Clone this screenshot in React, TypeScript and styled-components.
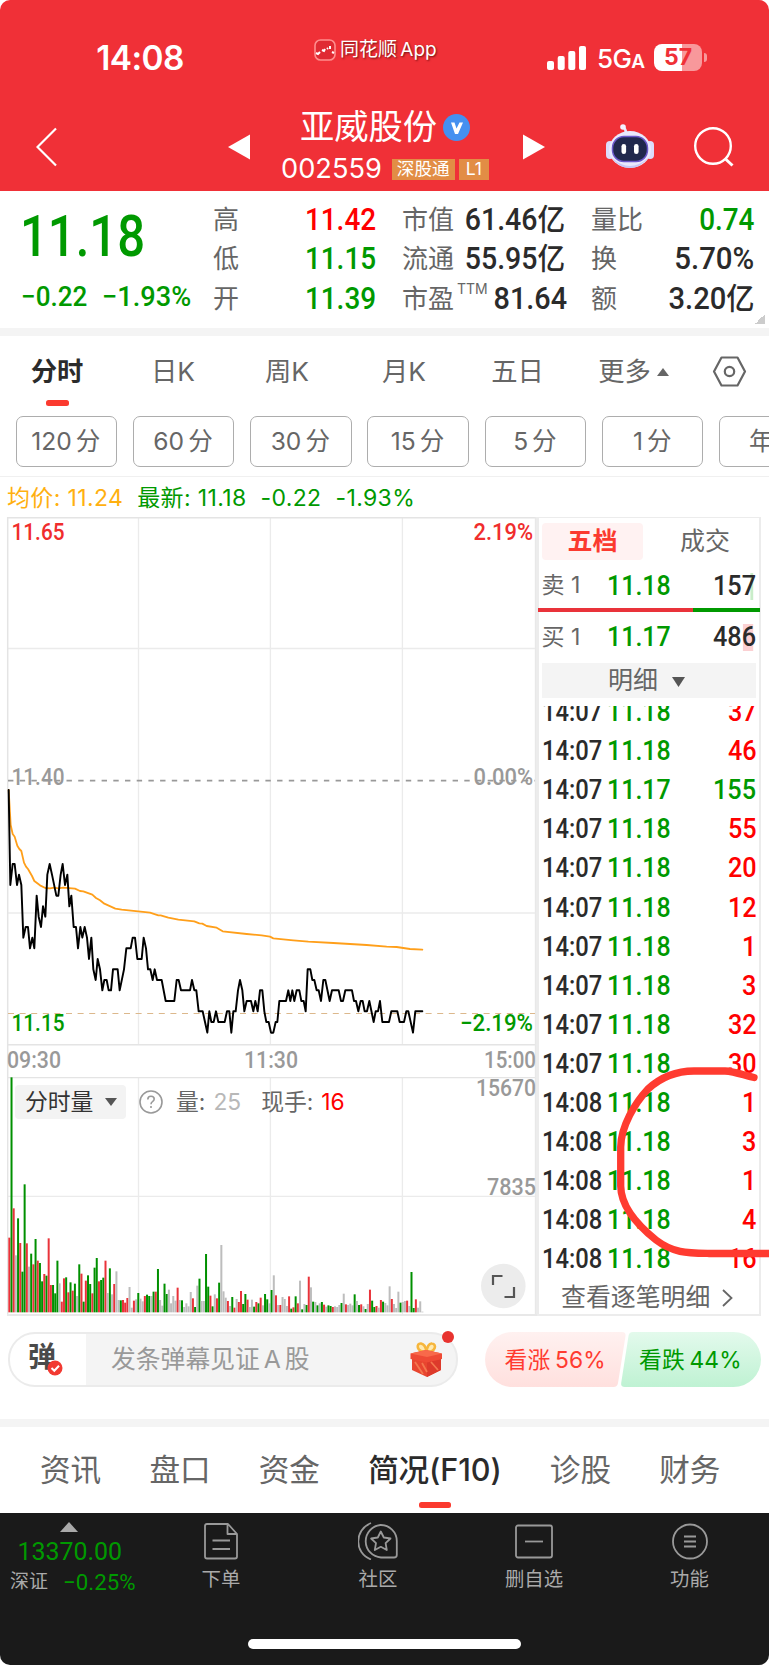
import React from "react";
import styled, { createGlobalStyle } from "styled-components";

const RED = "#ff0000";
const GREEN = "#009900";
const INK = "#2b2b2b";
const GREY = "#666";

const Global = createGlobalStyle`
  html, body { margin: 0; background: #fff; }
  * { box-sizing: border-box; }
`;

const Page = styled.main`
  position: relative;
  width: 769px;
  height: 1665px;
  overflow: hidden;
  border-radius: 10px;
  background: #fff;
  font-family: Inter, "Noto Sans CJK SC", sans-serif;
  line-height: 1.2;
  color: ${GREY};
  white-space: nowrap;
`;

const Num = styled.span<{ $size: number; $squeeze?: number; $end?: boolean; $color?: string; $weight?: number }>`
  display: inline-block;
  font-family: Roboto, "Noto Sans CJK SC", sans-serif;
  font-size: ${(p) => p.$size}px;
  font-weight: ${(p) => p.$weight ?? 500};
  color: ${(p) => p.$color ?? INK};
  line-height: 1;
  transform: scaleX(${(p) => p.$squeeze ?? 1});
  transform-origin: ${(p) => (p.$end ? "right" : "left")} center;
`;

/* ---------- header ---------- */
const Header = styled.header`
  height: 191px;
  background: #f03037;
  color: #fff;
`;
const StatusBar = styled.div`
  height: 107px;
  padding-top: 8px;
  display: grid;
  grid-template-columns: 280px 267px 1fr;
  align-items: center;
`;
const Clock = styled.div`
  margin-top: 2px;
  text-align: center;
  font-size: 33.4px;
  font-weight: 600;
  letter-spacing: -0.6px;
`;
const AppLabel = styled.div`
  display: flex;
  align-items: center;
  gap: 4px;
  margin: -14px 0 0 34px;
  font-size: 19px;
  word-spacing: -2px;
  text-shadow: 1px 1px 2px rgba(60, 0, 0, 0.7);
`;
const Signals = styled.div`
  display: flex;
  align-items: center;
`;
const Network = styled.div`
  width: 57px;
  padding: 2px 0 0 11px;
  font-size: 26px;
  font-weight: 500;
  letter-spacing: -0.6px;
  small { font-size: 19px; font-weight: 600; }
`;
const Battery = styled.div`
  width: 48px;
  height: 27px;
  margin-left: 11px;
  border-radius: 8px;
  background: linear-gradient(90deg, #fff 58%, #f8989b 58%);
  color: #f03037;
  font-size: 23px;
  line-height: 27px;
  font-weight: 700;
  text-align: center;
`;
const BatteryNub = styled.div`
  width: 3px;
  height: 9px;
  margin-left: 2px;
  border-radius: 0 4px 4px 0;
  background: #f8989b;
`;
const TitleBar = styled.div`
  height: 84px;
  display: grid;
  grid-template-columns: 36px 192px 22px 273px 60px 88px 1fr;
  align-items: center;
  > svg { display: block; margin-top: -4px; }
`;
const TitleBlock = styled.div`
  height: 84px;
  display: flex;
  flex-direction: column;
  align-items: center;
  padding-right: 3px;
`;
const StockName = styled.div`
  height: 40px;
  display: flex;
  align-items: center;
  gap: 6px;
  font-size: 34.3px;
  line-height: 40px;
`;
const CodeRow = styled.div`
  height: 48px;
  display: flex;
  align-items: center;
  font-size: 27.2px;
`;
const Tag = styled.span<{ $pad: number }>`
  height: 21px;
  line-height: 20px;
  padding: 0 ${(p) => p.$pad}px;
  margin-left: 4px;
  background: #e28d45;
  font-size: 17.6px;
  &:first-of-type { margin-left: 10px; }
`;

/* ---------- quote ---------- */
const Quote = styled.section`
  position: relative;
  height: 137px;
  display: grid;
  grid-template-columns: 213px 163.5px 163.5px 163.5px;
  column-gap: 25.5px;
`;
const LastPrice = styled.div`
  padding: 17px 0 0 20px;
  display: flex;
  flex-direction: column;
`;
const Deltas = styled.div`
  display: flex;
  gap: 9.5px;
  margin: 18px 0 0 1px;
`;
const StatColumn = styled.div`
  position: relative;
  padding-top: 9px;
  margin-left: -25.5px;
  margin-right: 25.5px;
`;
const StatRow = styled.div`
  height: 39.3px;
  display: flex;
  justify-content: space-between;
  align-items: center;
  font-size: 26px;
  line-height: 39px;
  sup { font-size: 14px; line-height: 14px; vertical-align: 14px; margin-left: 3px; }
  b { font-weight: 500; font-size: 30px; line-height: 1; }
`;
const Corner = styled.i`
  position: absolute;
  right: 4px;
  bottom: 4px;
  width: 10px;
  height: 10px;
  background: linear-gradient(135deg, transparent 50%, #ccc 50%);
`;
const Band = styled.div`
  height: 7.5px;
  background: #f4f4f4;
`;

/* ---------- period tabs ---------- */
const PeriodTabs = styled.nav`
  position: relative;
  height: 80.5px;
  display: grid;
  grid-template-columns: 114px 118px 110px 124px 103px 129px 1fr;
  > svg { margin: 20px 0 0 14px; }
`;
const PeriodTab = styled.div<{ $on?: boolean }>`
  display: flex;
  justify-content: center;
  align-items: center;
  height: 74px;
  padding-bottom: 2px;
  font-size: 26.3px;
  line-height: 34px;
  font-weight: ${(p) => (p.$on ? 700 : 400)};
  color: ${(p) => (p.$on ? INK : GREY)};
  position: relative;
  svg { margin-left: 6px; }
`;
const Marker = styled.i<{ $w: number; $bottom: number }>`
  position: absolute;
  bottom: ${(p) => p.$bottom}px;
  left: calc(50% - ${(p) => p.$w / 2}px);
  width: ${(p) => p.$w}px;
  height: 6px;
  border-radius: 2.5px;
  background: #fb3a2f;
`;
const MinuteRow = styled.div`
  height: 61px;
  padding-left: 15.5px;
  display: flex;
  gap: 15.8px;
  overflow: hidden;
  border-bottom: 1.5px solid #f0f0f0;
`;
const MinuteButton = styled.div`
  flex: 0 0 101.5px;
  height: 51px;
  border: 1.5px solid #adadad;
  border-radius: 7px;
  display: flex;
  justify-content: center;
  align-items: center;
  gap: 4px;
  padding: 1px 1px 0 0;
  font-size: 24.6px;
`;

/* ---------- chart ---------- */
const Summary = styled.div`
  height: 40px;
  padding: 3px 0 0 7px;
  display: flex;
  align-items: center;
  font-size: 23px;
  letter-spacing: 0.36px;
  color: ${GREEN};
  span { margin-right: 14px; }
  span:first-child { color: #ffb010; }
`;
const Market = styled.section`
  height: 799px;
  display: flex;
`;
const Charts = styled.div`
  position: relative;
  width: 537px;
  svg { display: block; }
`;
const VolumeLegend = styled.div`
  position: absolute;
  left: 15px;
  top: 567.5px;
  height: 34px;
  display: flex;
  align-items: center;
  font-size: 22.8px;
`;
const Selector = styled.div`
  width: 111px;
  height: 34px;
  padding-left: 10px;
  margin-right: 13px;
  border-radius: 4px;
  background: #f3f3f3;
  color: #333;
  display: flex;
  align-items: center;
  gap: 12px;
`;
const Legend = styled.span<{ $left: number; $color?: string }>`
  margin-left: ${(p) => p.$left}px;
  color: ${(p) => p.$color ?? GREY};
`;

/* ---------- order book ---------- */
const Book = styled.aside`
  position: relative;
  width: 224px;
  border: 2px solid #ececec;
  border-top-width: 1.5px;
`;
const BookTabs = styled.div`
  display: grid;
  grid-template-columns: 101px 1fr;
  padding: 5px 3px 0;
  height: 42px;
`;
const BookTab = styled.div<{ $on?: boolean }>`
  height: 37px;
  line-height: 36px;
  border-radius: 4px;
  text-align: center;
  font-size: 25px;
  font-weight: ${(p) => (p.$on ? 700 : 400)};
  color: ${(p) => (p.$on ? "#fb3a2f" : GREY)};
  background: ${(p) => (p.$on ? "#fff2f2" : "none")};
  padding-left: ${(p) => (p.$on ? 0 : 11)}px;
`;
const Level = styled.div<{ $h: number; $top: number; $depth: number; $tint: string }>`
  height: ${(p) => p.$h}px;
  padding: ${(p) => p.$top}px 2.5px 0 2.5px;
  display: grid;
  grid-template-columns: 65.5px 1fr auto;
  align-items: center;
  font-size: 23px;
  > :last-child {
    height: 27px;
    line-height: 27px;
    background: linear-gradient(${(p) => p.$tint}, ${(p) => p.$tint}) no-repeat;
    background-size: ${(p) => p.$depth}px 27px;
    background-position: right 3px top;
  }
`;
const Ratio = styled.div`
  height: 4px;
  margin: 0 -1px;
  background: linear-gradient(90deg, #e9333a 69.6%, ${GREEN} 69.6%);
`;
const DetailHead = styled.div`
  height: 35px;
  margin: 0 3px;
  padding: 0 5px 1px 0;
  background: #f4f4f4;
  display: flex;
  justify-content: center;
  align-items: center;
  gap: 14px;
  font-size: 25px;
  svg { margin-top: 3px; }
`;
const Tape = styled.div`
  height: 571px;
  margin-top: 8px;
  overflow: hidden;
`;
const TapeInner = styled.div`
  margin-top: -13px;
`;
const TapeRow = styled.div`
  height: 39.1px;
  padding: 0 2.5px 0 2.5px;
  display: grid;
  grid-template-columns: 65.5px 1fr auto;
  align-items: center;
`;
const BookFooter = styled.div`
  height: 38px;
  padding-left: 22px;
  padding-top: 3px;
  display: flex;
  align-items: center;
  gap: 12px;
  font-size: 24.9px;
`;
const Stroke = styled.svg`
  position: absolute;
  left: -2px;
  top: -1.5px;
  overflow: visible;
`;

/* ---------- comment bar ---------- */
const CommentBar = styled.section`
  height: 103px;
  padding: 15.5px 8px 0;
  display: flex;
`;
const CommentBox = styled.div`
  position: relative;
  width: 450px;
  height: 55px;
  border: 2px solid #ebebeb;
  border-radius: 27px;
  background: linear-gradient(90deg, #fff 76px, #f4f4f4 76px);
  display: flex;
  align-items: center;
  color: #999;
  font-size: 24.8px;
`;
const Danmu = styled.b`
  width: 76px;
  padding-left: 18px;
  font-size: 28px;
  font-weight: 700;
  line-height: 38px;
  margin-top: -4px;
  color: #4a4a4a;
`;
const Placeholder = styled.span`
  margin: 1px 0 0 25px;
  word-spacing: -3px;
`;
const Over = styled.svg<{ $x: number; $y: number }>`
  position: absolute;
  left: ${(p) => p.$x}px;
  top: ${(p) => p.$y}px;
  overflow: visible;
`;
const Votes = styled.div`
  position: relative;
  width: 276px;
  height: 55px;
  margin-left: 27px;
  display: flex;
  > svg { position: absolute; left: 0; top: 0; }
`;
const Vote = styled.div<{ $color: string; $left: number; $w: number }>`
  position: relative;
  width: ${(p) => p.$w}px;
  padding-left: ${(p) => p.$left}px;
  line-height: 56px;
  font-size: 22.8px;
  font-weight: 400;
  word-spacing: -2px;
  letter-spacing: 0.15px;
  color: ${(p) => p.$color};
`;

/* ---------- info tabs ---------- */
const InfoTabs = styled.nav`
  height: 86px;
  display: flex;
  gap: 48.2px;
  padding-left: 40px;
`;
const InfoTab = styled.div<{ $on?: boolean }>`
  position: relative;
  flex: 0 0 ${(p) => (p.$on ? 131 : 61)}px;
  display: flex;
  justify-content: center;
  font-size: 30.6px;
  line-height: 86px;
  font-weight: ${(p) => (p.$on ? 500 : 400)};
  letter-spacing: ${(p) => (p.$on ? -0.1 : 0)}px;
  color: ${(p) => (p.$on ? INK : GREY)};
`;

/* ---------- toolbar ---------- */
const Toolbar = styled.footer`
  height: 153px;
  background: #1a1a1a;
  color: #aaa;
`;
const Tools = styled.div`
  height: 126px;
  display: grid;
  grid-template-columns: 143px 156px 158px 154px 157px;
`;
const IndexCell = styled.div`
  padding-left: 10px;
  svg { display: block; margin: 9px 0 9px 50px; }
  > span { display: block; padding-left: 8px; height: 20px; line-height: 20px; }
`;
const IndexRow = styled.div`
  display: flex;
  align-items: center;
  gap: 14.5px;
  margin-top: 10px;
  font-size: 19px;
`;
const Tool = styled.div`
  display: flex;
  flex-direction: column;
  align-items: center;
  padding-top: 9px;
  font-size: 19.4px;
  line-height: 26px;
  svg { display: block; margin-bottom: 6px; }
`;
const HomeIndicator = styled.div`
  width: 273px;
  height: 10px;
  margin-left: 248px;
  border-radius: 5px;
  background: #fff;
`;

/* ---------- data ---------- */
const PRICE =
  "26,30 31,315 38,252 44,252 51,315 57,284 64,315 70,473 77,441 84,441 90,505 97,473 103,505 110,347 116,410 123,441 129,379 136,410 142,284 149,252 156,284 169,347 175,347 182,284 188,252 195,315 202,284 208,379 214,347 221,441 228,441 234,505 241,441 247,473 254,441 261,473 267,537 274,473 280,568 287,600 293,537 300,568 307,631 313,600 320,600 326,631 333,631 339,568 353,568 359,631 372,568 379,505 392,505 398,473 405,473 412,537 425,537 431,473 438,505 444,568 451,568 458,600 464,568 471,600 485,600 497,663 523,663 530,600 536,600 543,631 570,631 576,600 583,631 589,631 596,694 608,694 615,726 622,758 628,694 634,726 641,726 648,694 655,726 674,726 681,694 688,694 694,758 700,694 707,694 714,631 720,600 727,631 733,694 740,663 753,663 760,694 766,663 773,694 780,631 787,631 793,694 799,726 806,726 813,758 820,758 827,726 832,726 838,663 858,663 865,631 871,663 877,631 883,663 890,631 898,631 904,663 911,663 917,694 923,568 931,568 937,600 943,600 950,631 956,631 963,663 970,600 976,600 989,663 996,631 1016,631 1023,663 1029,663 1036,631 1056,631 1062,663 1068,663 1075,694 1082,663 1088,663 1094,694 1101,694 1108,663 1121,726 1127,694 1134,694 1140,663 1147,726 1167,726 1174,694 1192,694 1199,726 1212,726 1219,694 1225,694 1239,758 1246,694 1267,694";
const AVERAGE =
  "26,30 32,135 38,162 44,170 52,197 58,207 64,213 72,248 78,260 84,267 96,288 103,303 120,316 136,324 150,325 162,323 175,325 190,323 225,326 240,333 250,334 277,344 288,354 300,361 313,371 346,386 365,389 450,398 475,406 482,406 505,413 535,419 583,424 598,430 607,431 620,438 650,443 668,454 740,462 785,466 810,470 820,475 880,481 925,485 1000,489 1100,495 1160,500 1190,501 1230,507 1267,509";
const VOLUME =
  "r503 g22 r415 x556 g445 r519 g605 g343 r520 x590 g551 r583 g507 r572 g579 g634 r612 g617 r505 r645 g645 g670 g572 x640 r695 r625 g622 r667 g637 r662 g641 x678 g583 r611 g695 r632 g616 g642 r670 g593 g564 r634 g630 g623 r572 x669 g595 x673 r642 x604 x690 g691 r690 r698 r684 x651 x713 r692 x688 g669 x686 x694 r678 g674 g678 x678 g665 r665 g597 x690 x707 g641 g672 x659 x700 x678 x692 r653 x690 g691 x711 x700 x709 x666 r685 g711 x647 g626 x693 x693 g552 g650 r677 g709 x673 r685 g638 x525 x664 x683 r693 x708 g681 r713 x687 r696 r663 g702 g672 r689 x711 x689 g710 r696 g700 r683 x706 g672 g688 x700 g660 x616 r676 x705 r705 x681 x687 x708 r679 g716 r712 g679 r700 x632 g718 x702 g705 r620 x652 g695 x696 g706 x700 g696 r704 x710 g706 g708 r711 x709 x711 x705 g699 x671 r703 x705 x701 x706 g673 x693 g705 r703 x709 g717 x702 r659 g692 g711 r708 x713 r690 g695 x699 x706 x649 r687 x702 x714 x665 g698 x696 x693 r692 x708 g606 g714 r688 x713 x694 x725"
    .split(" ")
    .map((s) => ({ kind: s[0], top: Number(s.slice(1)) }));
const BAR: Record<string, string> = { r: "#e9333a", g: "#009000", x: "#bdbdbd" };

const TAPE: [string, string, string, boolean][] = [
  ["14:07", "11.18", "37", true],
  ["14:07", "11.18", "46", true],
  ["14:07", "11.17", "155", false],
  ["14:07", "11.18", "55", true],
  ["14:07", "11.18", "20", true],
  ["14:07", "11.18", "12", true],
  ["14:07", "11.18", "1", true],
  ["14:07", "11.18", "3", true],
  ["14:07", "11.18", "32", true],
  ["14:07", "11.18", "30", true],
  ["14:08", "11.18", "1", true],
  ["14:08", "11.18", "3", true],
  ["14:08", "11.18", "1", true],
  ["14:08", "11.18", "4", true],
  ["14:08", "11.18", "16", true],
];

/* ---------- pieces ---------- */
function AxisText({ x, y, w, fill, end, children }: { x: number; y: number; w: number; fill: string; end?: boolean; children: string }) {
  return (
    <text x={end ? x - w : x} y={y} textLength={w} lengthAdjust="spacingAndGlyphs" fill={fill} fontFamily="Roboto, sans-serif" fontWeight={500} fontSize={23.5}>
      {children}
    </text>
  );
}

function PriceChart() {
  return (
    <svg width="537" height="560" fill="none">
      <path d="M138.5 0V528M270.4 0V528M402.4 0V528M8 131.5H535M8 396H535" stroke="#ebebeb" strokeWidth="1.3" />
      <path d="M7.7 560V.7H536M7.7 527.7H536" stroke="#e4e4e4" strokeWidth="1.5" />
      <path d="M535.8 0V560" stroke="#e8e8e8" strokeWidth="2" />
      <path d="M8 263.7H535" stroke="#999" strokeWidth="1.8" strokeDasharray="5.4 6.3" />
      <path d="M8 496.5H535" stroke="#dcb88c" strokeWidth="1.1" strokeDasharray="6 5.6" />
      <AxisText x={11.5} y={22.5} w={53} fill="#f02d2d">11.65</AxisText>
      <AxisText x={533} y={22.5} w={59.5} fill="#f02d2d" end>2.19%</AxisText>
      <AxisText x={11.5} y={268} w={53} fill="#999">11.40</AxisText>
      <AxisText x={533} y={268} w={59.5} fill="#999" end>0.00%</AxisText>
      <AxisText x={11.5} y={514} w={53} fill={GREEN}>11.15</AxisText>
      <AxisText x={533} y={514} w={73} fill={GREEN} end>−2.19%</AxisText>
      <AxisText x={7} y={551} w={54} fill="#999">09:30</AxisText>
      <AxisText x={298} y={551} w={54} fill="#999" end>11:30</AxisText>
      <AxisText x={536} y={551} w={52} fill="#999" end>15:00</AxisText>
      <g transform="translate(0 263) scale(.33333)" strokeLinejoin="round" strokeLinecap="round">
        <polyline points={AVERAGE} stroke="#ff9f1a" strokeWidth="5.4" />
        <polyline points={PRICE} stroke="#000" strokeWidth="5.8" />
      </g>
    </svg>
  );
}

function VolumeChart() {
  return (
    <svg width="537" height="239" fill="none">
      <path d="M138.5 0V238M270.4 0V238M402.4 0V238M8 119.3H535" stroke="#ebebeb" strokeWidth="1.3" />
      <path d="M7.7 238.5V.5H536" stroke="#e4e4e4" strokeWidth="1.4" />
      <path d="M535.8 0V239M7 238H537" stroke="#e8e8e8" strokeWidth="2" />
      <AxisText x={536} y={19} w={60} fill="#999" end>15670</AxisText>
      <AxisText x={536} y={118} w={49} fill="#999" end>7835</AxisText>
      <g transform="translate(0 -7) scale(.33333)">
        {VOLUME.map((b, i) => (
          <rect key={i} x={25 + i * 6.557} y={b.top} width={6} height={727 - b.top} fill={BAR[b.kind]} />
        ))}
      </g>
      <circle cx="503.3" cy="209" r="22.3" fill="#ececec" />
      <path d="M493 208V199H502.5M514 210V220H504.5" stroke="#555" strokeWidth="2.2" />
    </svg>
  );
}

function Robot() {
  return (
    <svg width="48" height="46" viewBox="0 0 48 46">
      <path d="M20 9Q20 5 17 3" stroke="#e8e8ff" strokeWidth="2.6" fill="none" />
      <circle cx="17" cy="3" r="2.8" fill="#f4f2ff" />
      <rect x="0" y="17" width="8" height="18" rx="4" fill="#dcdcfb" />
      <rect x="40" y="17" width="8" height="18" rx="4" fill="#dcdcfb" />
      <ellipse cx="24" cy="25.500" rx="21" ry="18.500" fill="#e9e9fd" />
      <path d="M6 34Q24 50 42 34Q34 44 24 44Q13 44 6 34" fill="#c6c7f6" />
      <rect x="6.500" y="12.500" width="35" height="25" rx="11.500" fill="#20284c" stroke="#6a58c9" strokeWidth="1.5" />
      <rect x="15.500" y="20" width="4.600" height="10" rx="2.300" fill="#fff" />
      <rect x="28" y="20" width="4.600" height="10" rx="2.300" fill="#fff" />
    </svg>
  );
}

function Down({ w = 12, h = 9 }: { w?: number; h?: number }) {
  return (
    <svg width={w} height={h} viewBox="0 0 12 9" preserveAspectRatio="none">
      <path d="M0 0H12L6 9Z" fill="#555" />
    </svg>
  );
}

type StatProps = { label: string; value: string; color?: string; unit?: string; sup?: string; squeeze?: number };
const Stat = ({ label, value, color, unit, sup, squeeze = 0.9 }: StatProps) => (
  <StatRow>
    <span>{label}{sup && <sup>{sup}</sup>}</span>
    <Num $size={31} $squeeze={squeeze} $end $color={color}>{value}{unit && <b>{unit}</b>}</Num>
  </StatRow>
);

export default function App() {
  return (
    <Page>
      <Global />
      <Header>
        <StatusBar>
          <Clock>14:08</Clock>
          <AppLabel>
            <svg width="22" height="22" viewBox="0 0 22 22" fill="none">
              <rect x="1" y="1" width="20" height="20" rx="5.5" fill="#e02a33" stroke="#ff8d8d" strokeWidth="1.6" />
              <path d="M2 14l2 1 2-2M8 11l2 1 1-2M13 10l1-1M16 7v3M18 13l2 1" stroke="#fff" strokeWidth="2" />
            </svg>
            同花顺 App
          </AppLabel>
          <Signals>
            <svg width="39" height="24" fill="#fff">
              <rect x="0" y="15" width="7" height="9" rx="2" />
              <rect x="10.700" y="10" width="7" height="14" rx="2" />
              <rect x="21.300" y="5" width="7" height="19" rx="2" />
              <rect x="32" y="0" width="7" height="24" rx="2" />
            </svg>
            <Network>5G<small>A</small></Network>
            <Battery>57</Battery>
            <BatteryNub />
          </Signals>
        </StatusBar>
        <TitleBar>
          <span />
          <svg width="22" height="40" fill="none" stroke="#fff" strokeWidth="2.2"><path d="M20 1.500L1.500 20L20 38.500" /></svg>
          <svg width="22" height="26" fill="#fff"><path d="M0 13L22 .5V25.500Z" /></svg>
          <TitleBlock>
            <StockName>
              亚威股份
              <svg width="27" height="27" viewBox="0 0 27 27">
                <circle cx="13.500" cy="13.500" r="13.500" fill="#4590f0" />
                <path d="M8 8.500h3.500l2 6 3-6H20L15 20h-3z" fill="#fff" />
              </svg>
            </StockName>
            <CodeRow>002559<Tag $pad={5}>深股通</Tag><Tag $pad={7}>L1</Tag></CodeRow>
          </TitleBlock>
          <svg width="22" height="26" fill="#fff"><path d="M22 13L0 .5V25.500Z" /></svg>
          <svg width="72" height="46" viewBox="-23 0 72 46"><Robot /></svg>
          <svg width="64" height="42" viewBox="-23 0 64 42" fill="none" stroke="#fff" strokeWidth="2.4">
            <circle cx="19" cy="20" r="17.800" /><path d="M31.500 33L38.500 39.500" strokeWidth="3" />
          </svg>
        </TitleBar>
      </Header>

      <Quote>
        <LastPrice>
          <Num $size={57} $squeeze={0.86} $color={GREEN}>11.18</Num>
          <Deltas>
            <Num $size={28} $squeeze={0.93} $color={GREEN}>−0.22</Num>
            <Num $size={28} $squeeze={0.97} $color={GREEN}>−1.93%</Num>
          </Deltas>
        </LastPrice>
        <StatColumn>
          <Stat label="高" value="11.42" color={RED} />
          <Stat label="低" value="11.15" color={GREEN} />
          <Stat label="开" value="11.39" color={GREEN} />
        </StatColumn>
        <StatColumn>
          <Stat label="市值" value="61.46" unit="亿" squeeze={0.92} />
          <Stat label="流通" value="55.95" unit="亿" squeeze={0.92} />
          <Stat label="市盈" sup="TTM" value="81.64" squeeze={0.93} />
        </StatColumn>
        <StatColumn>
          <Stat label="量比" value="0.74" color={GREEN} />
          <Stat label="换" value="5.70%" squeeze={0.95} />
          <Stat label="额" value="3.20" unit="亿" squeeze={0.94} />
        </StatColumn>
        <Corner />
      </Quote>
      <Band />

      <PeriodTabs>
        <PeriodTab $on>分时<Marker $w={23} $bottom={3.5} /></PeriodTab>
        <PeriodTab>日K</PeriodTab>
        <PeriodTab>周K</PeriodTab>
        <PeriodTab>月K</PeriodTab>
        <PeriodTab>五日</PeriodTab>
        <PeriodTab>更多<svg width="12" height="8"><path d="M0 8L6 0L12 8Z" fill="#666" /></svg></PeriodTab>
        <svg width="35" height="31" fill="none" stroke="#666" strokeWidth="2.2">
          <path d="M9.500 1.500H25.500L33 15.500L25.500 29.500H9.500L2 15.500Z" strokeLinejoin="round" /><circle cx="17.500" cy="15.500" r="4.700" />
        </svg>
      </PeriodTabs>
      <MinuteRow>
        {["120", "60", "30", "15", "5", "1"].map((n) => (
          <MinuteButton key={n}><span>{n}</span><span>分</span></MinuteButton>
        ))}
        <MinuteButton>年K</MinuteButton>
      </MinuteRow>

      <Summary>
        <span>均价: 11.24</span><span>最新: 11.18</span><span>-0.22</span><span>-1.93%</span>
      </Summary>
      <Market>
        <Charts>
          <PriceChart />
          <VolumeChart />
          <VolumeLegend>
            <Selector>分时量<Down w={12} h={8} /></Selector>
            <svg width="24" height="24" fill="none" stroke="#999" strokeWidth="1.6">
              <circle cx="12" cy="12" r="11" />
              <path d="M8.800 9.500Q8.800 6.300 12 6.300Q15.200 6.300 15.200 9Q15.200 10.500 13.500 11.700Q12 12.700 12 14.300M12 16V18" />
            </svg>
            <Legend $left={13}>量:</Legend>
            <Legend $left={8} $color="#b8b8b8">25</Legend>
            <Legend $left={20}>现手:</Legend>
            <Legend $left={8} $color={RED}>16</Legend>
          </VolumeLegend>
        </Charts>
        <Book>
          <BookTabs><BookTab $on>五档</BookTab><BookTab>成交</BookTab></BookTabs>
          <Level $h={48} $top={4} $depth={3} $tint="#c9edc9">
            <span>卖 1</span><Num $size={27} $squeeze={0.925} $color={GREEN}>11.18</Num><Num $size={27} $squeeze={0.935} $end>157</Num>
          </Level>
          <Ratio />
          <Level $h={51} $top={0} $depth={11} $tint="#fbd0d2">
            <span>买 1</span><Num $size={27} $squeeze={0.925} $color={GREEN}>11.17</Num><Num $size={27} $squeeze={0.935} $end>486</Num>
          </Level>
          <DetailHead>明细<Down w={13} h={10} /></DetailHead>
          <Tape>
            <TapeInner>
              {TAPE.map(([t, p, q, up], i) => (
                <TapeRow key={i}>
                  <Num $size={27} $squeeze={0.88}>{t}</Num>
                  <Num $size={27} $squeeze={0.925} $color={GREEN}>{p}</Num>
                  <Num $size={27} $squeeze={0.935} $end $color={up ? RED : GREEN}>{q}</Num>
                </TapeRow>
              ))}
            </TapeInner>
          </Tape>
          <BookFooter>
            查看逐笔明细
            <svg width="11" height="18" fill="none" stroke="#666" strokeWidth="1.800"><path d="M1 1L9.500 9L1 17" /></svg>
          </BookFooter>
          <Stroke width="232" height="799" fill="none">
            <path
              d="M217 560.500C206 558 198 554.500 188 554H157C139 554 123 561 111 572C98 586 84 609 83.700 630V669C84 691 104 711 119 723C136 736 150 736 172 736.500H236"
              stroke="#ff3b30" strokeWidth="7.300" strokeLinecap="round" strokeLinejoin="round"
            />
          </Stroke>
        </Book>
      </Market>

      <CommentBar>
        <CommentBox>
          <Danmu>弹</Danmu>
          <Placeholder>发条弹幕见证 A 股</Placeholder>
          <Over width="16" height="16" $x={37} $y={26}>
            <circle cx="8" cy="8" r="7.500" fill="#f23a32" /><path d="M4.500 8L7.300 10.800L12 5.800" stroke="#fff" strokeWidth="2" fill="none" />
          </Over>
          <Over width="33" height="36" $x={400} $y={8}>
            <path d="M16 10C6 10 6 1 11 1.500C14 2 16 6 16.500 10C17 5 19 1 22 1.500C27 2 26 10 16.500 10" stroke="#f6b63c" strokeWidth="2.6" fill="#ffe9b0" />
            <path d="M2 14V28L17 35L31 28V14Z" fill="#e8452f" />
            <path d="M17 18V35L31 28V14Z" fill="#dd3a2b" />
            <path d="M0.500 11.500L16 8L32 11.500V17L17 20.500L0.500 17Z" fill="#ee4a35" />
            <path d="M0.500 11.500L16 8L32 11.500L17 15Z" fill="#f8694a" />
            <path d="M5 20L13 32M12 21L17 30M21 20L28 28" stroke="#f4764e" strokeWidth="1.8" />
          </Over>
          <Over width="12" height="12" $x={432} $y={-3}><circle cx="6" cy="6" r="6" fill="#e8332f" /></Over>
        </CommentBox>
        <Votes>
          <svg width="276" height="55">
            <defs>
              <linearGradient id="up" x2="0" y2="1"><stop stopColor="#fff1f0" /><stop offset="1" stopColor="#ffe0de" /></linearGradient>
              <linearGradient id="dn" x2="0" y2="1"><stop stopColor="#e3faec" /><stop offset="1" stopColor="#bff2d3" /></linearGradient>
            </defs>
            <path d="M27.500 0H137Q141 0 140.500 4L133 51Q132.400 55 128.500 55H27.500A27.500 27.500 0 0 1 27.500 0Z" fill="url(#up)" />
            <path d="M148 0H248.500A27.500 27.500 0 0 1 248.500 55H140Q135.500 55 136.200 51L143.500 4Q144 0 148 0Z" fill="url(#dn)" />
          </svg>
          <Vote $color="#ff3b30" $left={19.5} $w={139.5}>看涨 56%</Vote>
          <Vote $color={GREEN} $left={14.5} $w={136}>看跌 44%</Vote>
        </Votes>
      </CommentBar>
      <Band />

      <InfoTabs>
        <InfoTab>资讯</InfoTab><InfoTab>盘口</InfoTab><InfoTab>资金</InfoTab>
        <InfoTab $on>简况(F10)<Marker $w={32} $bottom={5} /></InfoTab>
        <InfoTab>诊股</InfoTab><InfoTab>财务</InfoTab>
      </InfoTabs>

      <Toolbar>
        <Tools>
          <IndexCell>
            <svg width="18" height="10"><path d="M0 10L9 0L18 10Z" fill="#aaa" /></svg>
            <Num $size={26.5} $squeeze={0.94} $color={GREEN} $weight={400}>13370.00</Num>
            <IndexRow>深证<Num $size={22.5} $squeeze={0.99} $color={GREEN} $weight={400}>−0.25%</Num></IndexRow>
          </IndexCell>
          <Tool>
            <svg width="34" height="38" fill="none" stroke="#999" strokeWidth="1.8" strokeLinejoin="round">
              <path d="M3 2H24L33 12V34.500Q33 36.500 31 36.500H3Q1 36.500 1 34.500V4Q1 2 3 2ZM23.500 2V12H33M8.500 18.500H26M8.500 27H26" />
            </svg>
            下单
          </Tool>
          <Tool>
            <svg width="40" height="38" fill="none" stroke="#999" strokeWidth="1.8" strokeLinejoin="round">
              <path d="M13 1C-4 8 -4 31 13 37.500M22.500 3A16 16 0 0 1 38.800 19V33Q38.800 35.500 36 35.500H23A16.300 16.300 0 0 1 22.500 3Z" />
              <path d="M22.800 9.500L25.800 15.500L32.500 16.500L27.600 21.200L28.800 28L22.800 24.800L16.800 28L18 21.200L13.100 16.500L19.800 15.500Z" />
            </svg>
            社区
          </Tool>
          <Tool>
            <svg width="38" height="38" fill="none" stroke="#999" strokeWidth="1.8">
              <rect x="1" y="3.500" width="36" height="32" rx="2" /><path d="M10 19.500H28" />
            </svg>
            删自选
          </Tool>
          <Tool>
            <svg width="38" height="38" fill="none" stroke="#999" strokeWidth="1.8">
              <circle cx="19" cy="19.500" r="17" /><path d="M13 14.500H25M13 19.500H25M13 24.500H25" />
            </svg>
            功能
          </Tool>
        </Tools>
        <HomeIndicator />
      </Toolbar>
    </Page>
  );
}
